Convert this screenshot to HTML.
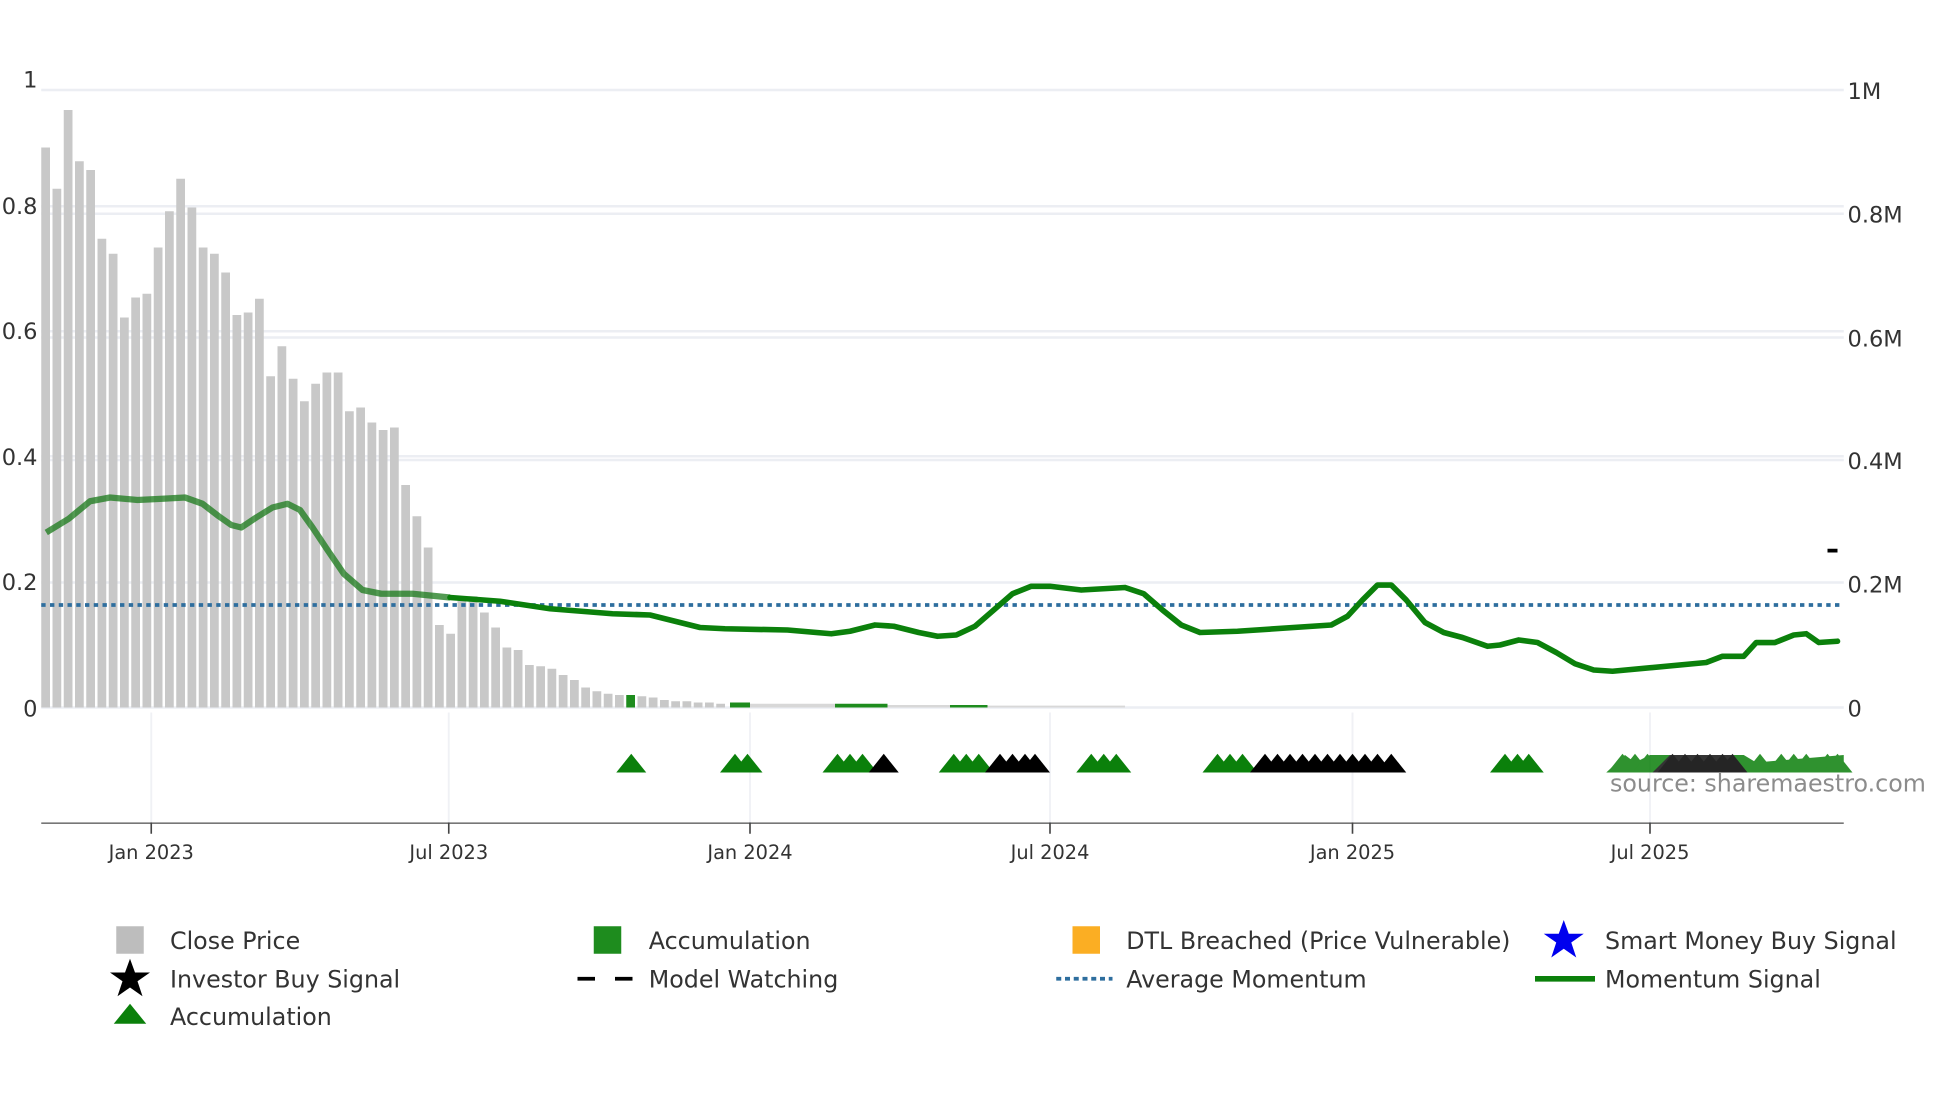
<!DOCTYPE html>
<html><head><meta charset="utf-8"><style>
html,body{margin:0;padding:0;background:#fff;}
svg{display:block;}
text{font-family:"DejaVu Sans","Liberation Sans",sans-serif;}
</style></head><body>
<svg width="1960" height="1102" viewBox="0 0 1568 881.6" preserveAspectRatio="none" xmlns="http://www.w3.org/2000/svg">
<defs>
<polygon id="tg" points="-12,618 0,603 12,618" fill="#0b800b"/>
<polygon id="tb" points="-12,618 0,603 12,618" fill="#000"/>
</defs>
<g stroke="#eceef3" stroke-width="2">
<line x1="33" y1="72" x2="1475" y2="72"/>
<line x1="33" y1="165" x2="1475" y2="165"/>
<line x1="33" y1="171" x2="1475" y2="171"/>
<line x1="33" y1="265" x2="1475" y2="265"/>
<line x1="33" y1="270" x2="1475" y2="270"/>
<line x1="33" y1="365" x2="1475" y2="365"/>
<line x1="33" y1="368" x2="1475" y2="368"/>
<line x1="33" y1="466" x2="1475" y2="466"/>
<line x1="33" y1="566" x2="1475" y2="566"/>
</g>
<g stroke="#f0f1f5" stroke-width="1.5">
<line x1="121" y1="570" x2="121" y2="658"/>
<line x1="359" y1="570" x2="359" y2="658"/>
<line x1="600" y1="570" x2="600" y2="658"/>
<line x1="840" y1="570" x2="840" y2="658"/>
<line x1="1082" y1="570" x2="1082" y2="658"/>
<line x1="1320" y1="570" x2="1320" y2="658"/>
</g>
<g fill="#c8c8c8">
<rect x="33" y="118" width="7" height="448"/>
<rect x="42" y="151" width="7" height="415"/>
<rect x="51" y="88" width="7" height="478"/>
<rect x="60" y="129" width="7" height="437"/>
<rect x="69" y="136" width="7" height="430"/>
<rect x="78" y="191" width="7" height="375"/>
<rect x="87" y="203" width="7" height="363"/>
<rect x="96" y="254" width="7" height="312"/>
<rect x="105" y="238" width="7" height="328"/>
<rect x="114" y="235" width="7" height="331"/>
<rect x="123" y="198" width="7" height="368"/>
<rect x="132" y="169" width="7" height="397"/>
<rect x="141" y="143" width="7" height="423"/>
<rect x="150" y="166" width="7" height="400"/>
<rect x="159" y="198" width="7" height="368"/>
<rect x="168" y="203" width="7" height="363"/>
<rect x="177" y="218" width="7" height="348"/>
<rect x="186" y="252" width="7" height="314"/>
<rect x="195" y="250" width="7" height="316"/>
<rect x="204" y="239" width="7" height="327"/>
<rect x="213" y="301" width="7" height="265"/>
<rect x="222" y="277" width="7" height="289"/>
<rect x="231" y="303" width="7" height="263"/>
<rect x="240" y="321" width="7" height="245"/>
<rect x="249" y="307" width="7" height="259"/>
<rect x="258" y="298" width="7" height="268"/>
<rect x="267" y="298" width="7" height="268"/>
<rect x="276" y="329" width="7" height="237"/>
<rect x="285" y="326" width="7" height="240"/>
<rect x="294" y="338" width="7" height="228"/>
<rect x="303" y="344" width="7" height="222"/>
<rect x="312" y="342" width="7" height="224"/>
<rect x="321" y="388" width="7" height="178"/>
<rect x="330" y="413" width="7" height="153"/>
<rect x="339" y="438" width="7" height="128"/>
<rect x="348" y="500" width="7" height="66"/>
<rect x="357" y="507" width="7" height="59"/>
<rect x="366" y="478" width="7" height="88"/>
<rect x="375" y="477" width="7" height="89"/>
<rect x="384" y="490" width="7" height="76"/>
<rect x="393" y="502" width="7" height="64"/>
<rect x="402" y="518" width="7" height="48"/>
<rect x="411" y="520" width="7" height="46"/>
<rect x="420" y="532" width="7" height="34"/>
<rect x="429" y="533" width="7" height="33"/>
<rect x="438" y="535" width="7" height="31"/>
<rect x="447" y="540" width="7" height="26"/>
<rect x="456" y="544" width="7" height="22"/>
<rect x="465" y="550" width="7" height="16"/>
<rect x="474" y="553" width="7" height="13"/>
<rect x="483" y="555" width="7" height="11"/>
<rect x="492" y="556" width="7" height="10"/>
<rect x="510" y="557" width="7" height="9"/>
<rect x="519" y="558" width="7" height="8"/>
<rect x="528" y="560" width="7" height="6"/>
<rect x="537" y="561" width="7" height="5"/>
<rect x="546" y="561" width="7" height="5"/>
<rect x="555" y="562" width="7" height="4"/>
<rect x="564" y="562" width="7" height="4"/>
<rect x="573" y="563" width="7" height="3"/>
</g>
<g fill="#d8d8d8">
<rect x="600" y="563" width="68" height="3"/>
<rect x="710" y="564" width="50" height="2"/>
<rect x="790" y="564.5" width="110" height="1.5"/>
</g>
<g fill="#1e8c1e">
<rect x="501" y="556" width="7" height="10"/>
<rect x="584" y="562" width="16" height="4"/>
<rect x="668" y="563" width="42" height="3"/>
<rect x="760" y="564" width="30" height="2"/>
</g>
<line x1="33" y1="484" x2="1473" y2="484" stroke="#2e6e9e" stroke-width="3" stroke-dasharray="3.5,3.5"/>
<path d="M37,426 L55,415 L72,401 L88,398 L110,400 L130,399 L148,398 L162,403 L175,413 L185,420 L193,422 L205,414 L218,406 L230,403 L240,408 L250,422 L262,440 L275,459 L290,472 L305,475 L330,475 L360,478" fill="none" stroke="#1a7a1a" stroke-opacity="0.75" stroke-width="5" stroke-linejoin="round"/>
<path d="M360,478 L400,481 L440,487 L490,491 L520,492 L540,497 L560,502 L580,503 L630,504 L665,507 L680,505 L700,500 L715,501 L735,506 L750,509 L765,508 L780,501 L795,488 L810,475 L825,469 L840,469 L865,472 L900,470 L915,475 L930,488 L945,500 L960,506 L990,505 L1065,500 L1078,493 L1090,480 L1102,468 L1113,468 L1125,480 L1140,498 L1155,506 L1170,510 L1190,517 L1200,516 L1215,512 L1230,514 L1245,522 L1260,531 L1275,536 L1290,537 L1365,530 L1378,525 L1395,525 L1405,514 L1420,514 L1435,508 L1445,507 L1455,514 L1470,513" fill="none" stroke="#0b800b" stroke-width="4.5" stroke-linejoin="round" stroke-linecap="round"/>
<rect x="1462" y="439" width="8" height="3" fill="#000"/>
<use href="#tg" x="505"/>
<use href="#tg" x="588"/><use href="#tg" x="598"/>
<use href="#tg" x="670"/><use href="#tg" x="680"/><use href="#tg" x="690"/><use href="#tb" x="707"/>
<use href="#tg" x="763"/><use href="#tg" x="773"/><use href="#tg" x="783"/><use href="#tb" x="800"/><use href="#tb" x="810"/><use href="#tb" x="820"/><use href="#tb" x="828"/>
<use href="#tg" x="873"/><use href="#tg" x="883"/><use href="#tg" x="893"/>
<use href="#tg" x="974"/><use href="#tg" x="984"/><use href="#tg" x="994"/>
<use href="#tb" x="1012"/><use href="#tb" x="1022"/><use href="#tb" x="1032"/><use href="#tb" x="1042"/><use href="#tb" x="1052"/><use href="#tb" x="1062"/><use href="#tb" x="1072"/><use href="#tb" x="1082"/><use href="#tb" x="1092"/><use href="#tb" x="1102"/><use href="#tb" x="1113"/>
<use href="#tg" x="1204"/><use href="#tg" x="1214"/><use href="#tg" x="1223"/>
<g opacity="0.85">
<polygon points="1285,618 1300,604 1308,610 1320,604 1395,604 1405,610 1475,604 1475,618" fill="#0b800b"/>
<use href="#tg" x="1298"/><use href="#tg" x="1308"/><use href="#tg" x="1318"/>
<use href="#tg" x="1408"/><use href="#tg" x="1425"/><use href="#tg" x="1435"/><use href="#tg" x="1445"/><use href="#tg" x="1462"/><use href="#tg" x="1470"/>
<polygon points="1322,618 1336,604 1385,604 1396,618" fill="#111"/>
<use href="#tb" x="1338"/><use href="#tb" x="1348"/><use href="#tb" x="1358"/><use href="#tb" x="1368"/><use href="#tb" x="1378"/><use href="#tb" x="1386"/>
</g>
<text x="1288" y="633" font-size="19" fill="#8c8c8c">source: sharemaestro.com</text>
<line x1="33" y1="658.5" x2="1475" y2="658.5" stroke="#777" stroke-width="1.3"/>
<g stroke="#444" stroke-width="1.3">
<line x1="121" y1="658" x2="121" y2="667"/><line x1="359" y1="658" x2="359" y2="667"/><line x1="600" y1="658" x2="600" y2="667"/><line x1="840" y1="658" x2="840" y2="667"/><line x1="1082" y1="658" x2="1082" y2="667"/><line x1="1320" y1="658" x2="1320" y2="667"/>
</g>
<g font-size="15.5" fill="#333" text-anchor="middle">
<text x="121" y="687">Jan 2023</text><text x="359" y="687">Jul 2023</text><text x="600" y="687">Jan 2024</text><text x="840" y="687">Jul 2024</text><text x="1082" y="687">Jan 2025</text><text x="1320" y="687">Jul 2025</text>
</g>
<g font-size="18" fill="#333" text-anchor="end">
<text x="30" y="70">1</text><text x="30" y="171">0.8</text><text x="30" y="271">0.6</text><text x="30" y="372">0.4</text><text x="30" y="472">0.2</text><text x="30" y="573">0</text>
</g>
<g font-size="18" fill="#333">
<text x="1478" y="79">1M</text><text x="1478" y="178">0.8M</text><text x="1478" y="277">0.6M</text><text x="1478" y="375">0.4M</text><text x="1478" y="474">0.2M</text><text x="1478" y="573">0</text>
</g>
<g font-size="19" fill="#333">
<rect x="93" y="741" width="22" height="22" fill="#bdbdbd"/><text x="136" y="759">Close Price</text>
<rect x="475" y="741" width="22" height="22" fill="#1e8c1e"/><text x="519" y="759">Accumulation</text>
<rect x="858" y="741" width="22" height="22" fill="#fbae23"/><text x="901" y="759">DTL Breached (Price Vulnerable)</text>
<polygon points="1251,736 1255,747 1267,747 1257,754 1261,766 1251,759 1241,766 1245,754 1235,747 1247,747" fill="#0000ee"/><text x="1284" y="759">Smart Money Buy Signal</text>
<polygon points="104,767 108,778 120,778 110,785 114,797 104,790 94,797 98,785 88,778 100,778" fill="#000"/><text x="136" y="790">Investor Buy Signal</text>
<line x1="462" y1="783" x2="506" y2="783" stroke="#000" stroke-width="3" stroke-dasharray="14,16"/><text x="519" y="790">Model Watching</text>
<line x1="845" y1="783" x2="890" y2="783" stroke="#2e6e9e" stroke-width="3" stroke-dasharray="4,3"/><text x="901" y="790">Average Momentum</text>
<line x1="1228" y1="783" x2="1276" y2="783" stroke="#0b800b" stroke-width="4.5"/><text x="1284" y="790">Momentum Signal</text>
<polygon points="91,819 104,803 117,819" fill="#0b800b"/><text x="136" y="820">Accumulation</text>
</g>
</svg>
</body></html>
